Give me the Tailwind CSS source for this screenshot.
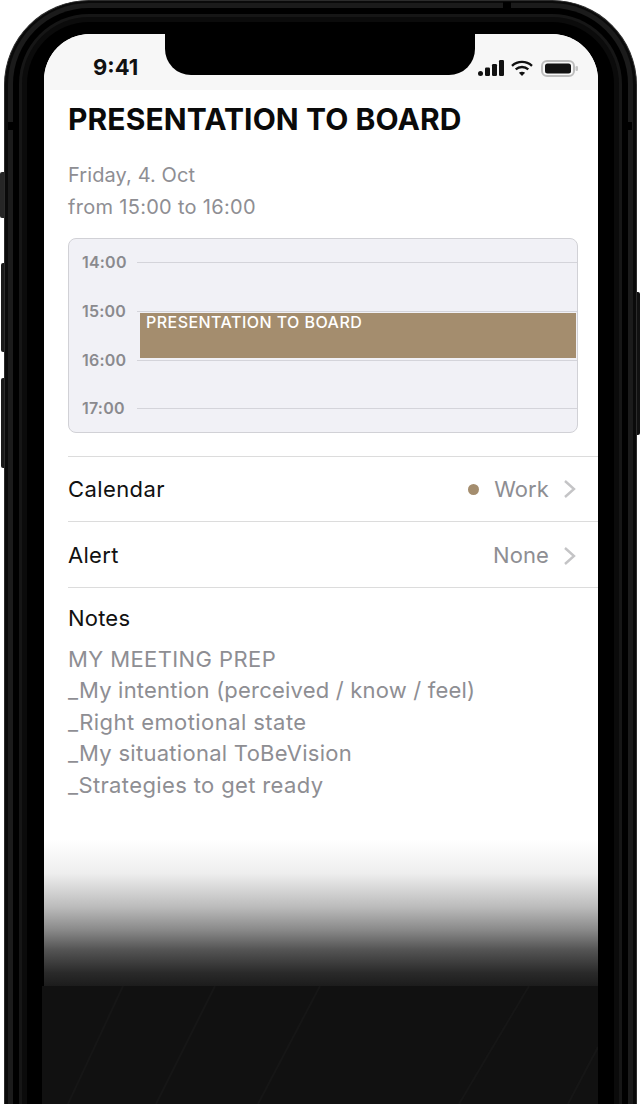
<!DOCTYPE html>
<html lang="en">
<head>
  <meta charset="UTF-8" />
  <meta name="viewport" content="width=device-width, initial-scale=1.0" />
  <title>Presentation to board</title>
  <script src="https://cdn.jsdelivr.net/npm/@tailwindcss/browser@4"></script>
</head>
<body class="bg-white font-['Inter',sans-serif]">
  <div class="relative w-[640px] h-[1104px] overflow-hidden bg-white">
    <!-- side buttons -->
    <div class="absolute left-[0px] top-[172px] w-[6px] h-[46px] rounded-l-[2px] bg-[#262626]"></div>
    <div class="absolute left-[1px] top-[263px] w-[5px] h-[89px] rounded-l-[2px] bg-[#1a1a1a]"></div>
    <div class="absolute left-[1px] top-[378px] w-[5px] h-[90px] rounded-l-[2px] bg-[#1a1a1a]"></div>
    <div class="absolute right-[0px] top-[292px] w-[6px] h-[143px] rounded-r-[2px] bg-[#111]"></div>

    <!-- phone body, one layer per metal band -->
    <div class="absolute left-[4px] top-0 w-[633px] h-[1160px] rounded-t-[85px] border-x border-t border-[#2c2c2c] bg-[#0a0a0a] px-[3px] pt-[2px]">
      <div class="h-full rounded-t-[81px] bg-[#1b1b1b] px-[5px] pt-[5px]">
        <div class="h-full rounded-t-[76px] bg-black px-[6px] pt-[6px]">
          <div class="h-full rounded-t-[70px] bg-[#161616] px-[3px] pt-[3px]">
            <div class="h-full rounded-t-[67px] bg-[#0b0b0b] px-[5px] pt-[5px]">
              <div class="h-full rounded-t-[62px] bg-black"></div>
            </div>
          </div>
        </div>
      </div>
    </div>
    <!-- antenna breaks -->
    <div class="absolute left-[8px] top-[122px] w-[5px] h-[8px] bg-black"></div>
    <div class="absolute left-[626px] top-[122px] w-[6px] h-[8px] bg-black"></div>
    <div class="absolute left-[503px] top-[2px] w-[8px] h-[6px] bg-black"></div>

    <!-- screen -->
    <div class="absolute left-[44px] top-[34px] w-[554px] h-[1070px] rounded-t-[46px] overflow-hidden bg-white flex flex-col">
      <div class="h-[56px] shrink-0 bg-[#f7f7f7] flex justify-between pl-[49px] pr-[20px] pt-[21px]">
        <span class="text-[22px] leading-[24px] font-bold text-[#111]">9:41</span>
        <div class="flex items-start pt-[5px]">
          <svg width="26" height="16" viewBox="0 0 26 16" fill="#111"><rect x="0" y="11" width="5" height="5" rx="2.5"/><rect x="7" y="7.5" width="5" height="8.5" rx="1.2"/><rect x="14" y="4" width="5" height="12" rx="1.2"/><rect x="21" y="0" width="5" height="16" rx="1.2"/></svg>
          <svg class="ml-[7px]" width="22" height="16" viewBox="0 0 22 16" fill="none" stroke="#111" stroke-width="2.4"><path d="M1 5.8C6.7 .6 15.3 .6 21 5.8"/><path d="M4.7 9.4c3.6-3.2 9-3.2 12.6 0"/><path d="M11 16l-3.1-3.2c1.8-1.4 4.4-1.4 6.2 0z" fill="#111" stroke="none"/></svg>
          <svg class="ml-[8px]" width="37" height="17" viewBox="0 0 37 17"><rect x="1" y="1" width="32" height="15" rx="5" fill="none" stroke="#bdbdbd" stroke-width="2"/><rect x="4" y="3.5" width="26" height="10" rx="2.5" fill="#111"/><rect x="34.5" y="6" width="2.5" height="5" rx="1.2" fill="#c4c4c4"/></svg>
        </div>
      </div>

      <div class="flex-1 flex flex-col pl-[24px]">
        <h1 class="mt-[9px] text-[30px] leading-[40px] font-bold text-[#0a0a0a] tracking-[0.1px] whitespace-nowrap">PRESENTATION TO BOARD</h1>

        <div class="mt-[21px] text-[20px] leading-[31.5px] text-[#8e8e93]">
          <p class="tracking-[0.1px]">Friday, 4. Oct</p>
          <p class="tracking-[0.3px]">from 15:00 to 16:00</p>
        </div>

        <!-- day view -->
        <div class="relative mt-[15px] w-[510px] h-[195px] rounded-[8px] border border-[#d1d1d6] bg-[#f1f1f6] flex flex-col pt-[11px] pl-[13px]">
          <div class="flex items-center h-[24px] mb-[25px] gap-[8px]"><span class="w-[47px] text-[16px] tracking-[0.2px] font-semibold text-[#8a8a8e]">14:00</span><div class="flex-1 h-px bg-[#d4d4da]"></div></div>
          <div class="flex items-center h-[24px] mb-[25px] gap-[8px]"><span class="w-[47px] text-[16px] tracking-[0.2px] font-semibold text-[#8a8a8e]">15:00</span><div class="flex-1 h-px bg-[#d4d4da]"></div></div>
          <div class="flex items-center h-[24px] mb-[24px] gap-[8px]"><span class="w-[47px] text-[16px] tracking-[0.2px] font-semibold text-[#8a8a8e]">16:00</span><div class="flex-1 h-px bg-[#d4d4da]"></div></div>
          <div class="flex items-center h-[24px] gap-[8px]"><span class="w-[47px] text-[16px] tracking-[0.2px] font-semibold text-[#8a8a8e]">17:00</span><div class="flex-1 h-px bg-[#d4d4da]"></div></div>
          <div class="absolute left-[71px] top-[74px] w-[436px] h-[45px] bg-[#a48d6e] pl-[6px] text-[16px] leading-[19px] font-medium tracking-[0.45px] text-white whitespace-nowrap">PRESENTATION TO BOARD</div>
        </div>

        <!-- rows -->
        <div class="mt-[23px] h-[65px] border-t border-[#dcdcdc] flex items-center justify-between pr-[22px]">
          <span class="text-[22px] tracking-[0.4px] text-[#111]">Calendar</span>
          <div class="flex items-center">
            <span class="w-[11px] h-[11px] rounded-full bg-[#a48d6e] mr-[15px]"></span>
            <span class="text-[22px] tracking-[0.1px] text-[#8e8e93]">Work</span>
            <svg class="ml-[14px]" width="13" height="20" viewBox="0 0 13 20" fill="none" stroke="#c4c4c6" stroke-width="2.4"><path d="M2 2l9 8-9 8"/></svg>
          </div>
        </div>
        <div class="h-[66px] pt-[2px] border-t border-[#dcdcdc] flex items-center justify-between pr-[22px]">
          <span class="text-[22px] tracking-[0.3px] text-[#111]">Alert</span>
          <div class="flex items-center">
            <span class="text-[22px] tracking-[0.1px] text-[#8e8e93]">None</span>
            <svg class="ml-[14px]" width="13" height="20" viewBox="0 0 13 20" fill="none" stroke="#c4c4c6" stroke-width="2.4"><path d="M2 2l9 8-9 8"/></svg>
          </div>
        </div>
        <div class="border-t border-[#dcdcdc] pt-[14px]">
          <p class="text-[22px] leading-[32px] tracking-[0.2px] text-[#111]">Notes</p>
          <div class="mt-[10px] text-[22px] leading-[31.4px] text-[#8e8e93] whitespace-nowrap">
            <p class="tracking-[0.4px]">MY MEETING PREP</p>
            <p class="tracking-[0.2px]">_My intention (perceived / know / feel)</p>
            <p class="tracking-[0.43px]">_Right emotional state</p>
            <p class="tracking-[0.28px]">_My situational ToBeVision</p>
            <p class="tracking-[0.37px]">_Strategies to get ready</p>
          </div>
        </div>
      </div>
    </div>

    <!-- notch -->
    <div class="absolute left-[165px] top-[30px] w-[310px] h-[45px] rounded-b-[26px] bg-black"></div>

    <!-- fade over the lower part of the screen -->
    <div class="absolute left-[44px] top-[840px] w-[554px] h-[146px] bg-[linear-gradient(to_bottom,#ffffff_0%,#eeeeee_23%,#bbbbbb_46%,#888888_62%,#555555_75%,#2a2a2a_91%,#1c1c1c_100%)]"></div>
    <div class="absolute left-[42px] top-[986px] w-[556px] h-[118px] bg-[#111] overflow-hidden">
      <svg width="556" height="118" viewBox="0 0 556 118" fill="none" stroke="#161616" stroke-width="2"><path d="M81 0L26 118"/><path d="M173 0L114 118"/><path d="M278 0L216 118"/><path d="M487 0L417 118"/><path d="M556 61L526 118"/></svg>
    </div>
  </div>
</body>
</html>
